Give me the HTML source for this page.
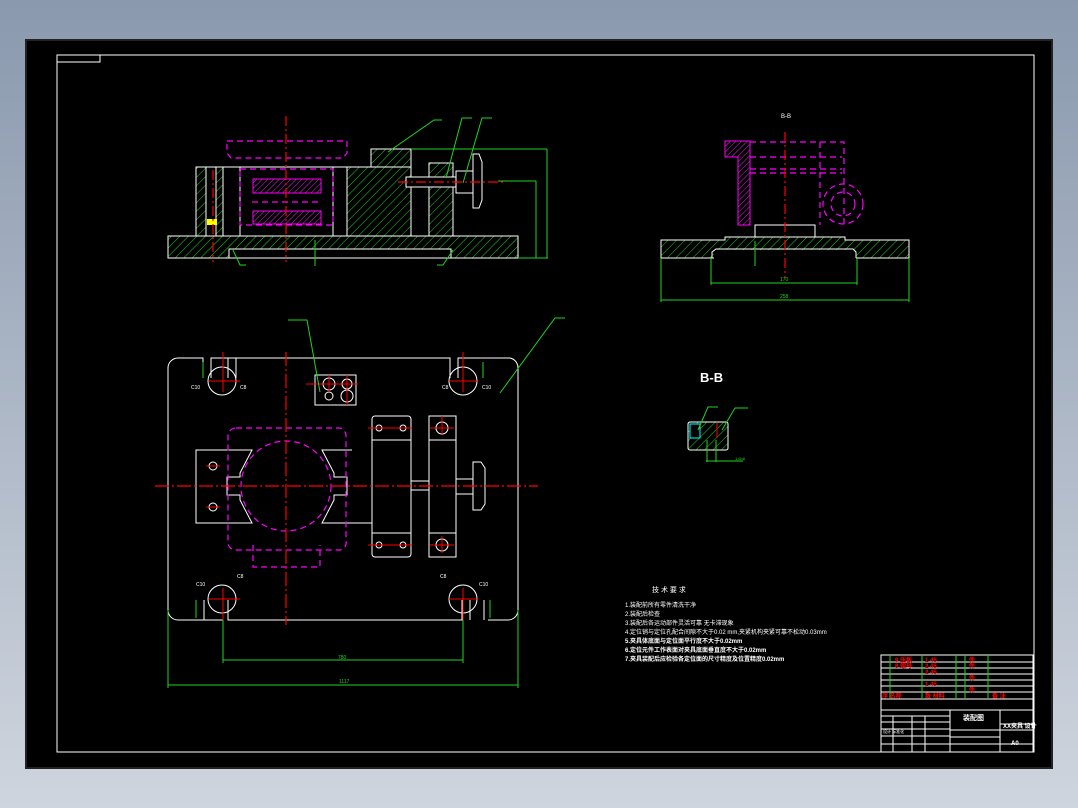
<!DOCTYPE html>
<html><head><meta charset="utf-8"><style>
html,body{margin:0;padding:0;width:1078px;height:808px;overflow:hidden;background:linear-gradient(#8a99ae,#cfd5de);}
svg{position:absolute;left:0;top:0}
text{font-family:"Liberation Sans","Noto Sans CJK SC",sans-serif}
</style></head><body>
<svg width="1078" height="808" viewBox="0 0 1078 808">
<defs>
<pattern id="hg" width="6" height="6" patternUnits="userSpaceOnUse" patternTransform="rotate(45)"><line x1="0" y1="0" x2="0" y2="6" stroke="#1fd41f" stroke-width="1"/></pattern>
<pattern id="hm" width="4" height="4" patternUnits="userSpaceOnUse" patternTransform="rotate(45)"><line x1="0" y1="0" x2="0" y2="4" stroke="#e020e0" stroke-width="1"/></pattern>
</defs>
<rect x="26" y="40" width="1026" height="728" fill="#000" stroke="#222" stroke-width="2"/>
<rect x="57" y="55" width="977" height="697" fill="none" stroke="#fff" stroke-width="1"/>
<rect x="57" y="55" width="43" height="7" fill="none" stroke="#fff" stroke-width="1"/>

<!-- FRONT VIEW -->
<g stroke="#fff" stroke-width="1">
<rect x="168" y="236" width="350" height="22" fill="url(#hg)"/>
<rect x="229" y="249" width="222" height="9" fill="#000"/>
<rect x="196" y="167" width="27" height="69" fill="url(#hg)"/>
<rect x="206" y="167" width="10" height="69" fill="#000"/>
<rect x="223" y="167" width="124" height="69" fill="none"/>
<rect x="347" y="167" width="64" height="69" fill="url(#hg)"/>
<rect x="371" y="149" width="40" height="18" fill="url(#hg)"/>
<rect x="429" y="163" width="24" height="73" fill="url(#hg)"/>
<rect x="406" y="177" width="50" height="10" fill="#000"/>
<rect x="456" y="171" width="17" height="22" fill="none"/>
<path d="M473 154 h6 l3 8 v38 l-3 8 h-6 z" fill="none"/>
<line x1="240" y1="167" x2="240" y2="236"/><line x1="333" y1="167" x2="333" y2="236"/>
</g>
<rect x="207" y="219" width="10" height="6" fill="#ff0" />
<g stroke="#f0f" stroke-width="1.2" fill="none" stroke-dasharray="6 4">
<path d="M227 141 h120 v12 l-4 5 h-112 l-4 -5 z"/>
<rect x="240" y="169" width="93" height="56"/>
<line x1="252" y1="202" x2="320" y2="202"/>
</g>
<rect x="253" y="179" width="68" height="14" fill="url(#hm)" stroke="#f0f"/>
<rect x="253" y="211" width="68" height="13" fill="url(#hm)" stroke="#f0f"/>
<g stroke="#f00" stroke-width="1.2" stroke-dasharray="10 3 2 3">
<line x1="286" y1="116" x2="286" y2="262"/>
<line x1="213" y1="170" x2="213" y2="262"/>
<line x1="398" y1="182" x2="505" y2="182"/>
</g>
<g stroke="#1fd41f" stroke-width="1" fill="none">
<polyline points="388,152 434,120 442,120"/>
<polyline points="446,178 462,118 472,118"/>
<polyline points="463,183 482,118 492,118"/>
<path d="M411 149 H547 M498 181 H536 M536 181 V258 M547 149 V258 M518 258 H548"/>
<line x1="315" y1="240" x2="315" y2="266"/>
<polyline points="233,250 240,265 246,265"/>
<polyline points="453,250 443,265 437,265"/>
</g>

<!-- SIDE VIEW -->
<text x="781" y="118" fill="#fff" font-size="6">B-B</text>
<g stroke="#fff" stroke-width="1">
<path d="M661 240 H725 V237 H845 V240 H909 V258 H661 Z" fill="url(#hg)"/>
<rect x="714" y="250" width="142" height="9" fill="#000" stroke="none"/>
<path d="M712 258 V252 L716 249 H853 L856 252 V258" fill="none"/>
<rect x="755" y="225" width="60" height="12" fill="none"/>
</g>
<path d="M725 141 H750 V225 H738 V157 H725 Z" fill="url(#hm)" stroke="#f0f"/>
<g stroke="#f0f" stroke-width="1.2" fill="none" stroke-dasharray="6 4">
<path d="M750 142 H844 V225 M750 157 H842 M750 169 H842 M750 173 H842 M820 142 V225"/>
<circle cx="843" cy="204" r="20"/>
<circle cx="843" cy="204" r="12"/>
</g>
<line x1="785" y1="132" x2="785" y2="278" stroke="#f00" stroke-width="1.2" stroke-dasharray="10 3 2 3"/>
<g stroke="#1fd41f" stroke-width="1" fill="none">
<path d="M711 258 V285 M857 258 V285 M711 283 H857 M661 258 V302 M909 258 V302 M661 300 H909"/>
<line x1="755" y1="241" x2="755" y2="266"/>
</g>
<text x="780" y="281" fill="#1fd41f" font-size="5">170</text>
<text x="780" y="298" fill="#1fd41f" font-size="5">258</text>

<!-- TOP VIEW -->
<g stroke="#fff" stroke-width="1" fill="none">
<path d="M178 358 H203 V378 M211 378 V358 H236 V378 M228 378 V358 H450 V378 M458 378 V358 H510 A10 10 0 0 1 518 368 V610 A10 10 0 0 1 508 620 H488 M470 620 V600 M462 600 V620 H228 V600 M223 600 V620 H178 A10 10 0 0 1 168 610 V368 A10 10 0 0 1 178 358"/>
<path d="M203 358 V378 M458 358 V378 M462 620 V600 M223 620 V600 M204 620 V600 M484 620 V600"/>
<circle cx="222" cy="381" r="14"/><circle cx="463" cy="381" r="14"/>
<circle cx="222" cy="599" r="14"/><circle cx="463" cy="599" r="14"/>
<rect x="315" y="375" width="41" height="30"/>
<circle cx="329" cy="384" r="6"/><circle cx="347" cy="384" r="5"/><circle cx="347" cy="396" r="6"/><circle cx="329" cy="396" r="4"/>
<path d="M196 450 H252 L240 473 V477 H227 V495 H240 V500 L252 523 H196 Z"/>
<path d="M352 450 H322 L334 473 V477 H347 V495 H334 V500 L322 523 H372"/>
<rect x="372" y="416" width="39" height="141" rx="3"/>
<line x1="372" y1="440" x2="411" y2="440"/><line x1="372" y1="533" x2="411" y2="533"/>
<rect x="429" y="416" width="27" height="141"/>
<line x1="429" y1="440" x2="456" y2="440"/><line x1="429" y1="533" x2="456" y2="533"/>
<circle cx="442" cy="428" r="6"/><circle cx="442" cy="545" r="6"/>
<rect x="411" y="481" width="18" height="9"/>
<rect x="456" y="479" width="17" height="15"/>
<path d="M473 462 h8 l4 6 v36 l-4 6 h-8 z"/>
<circle cx="213" cy="466" r="4"/><circle cx="213" cy="507" r="4"/>
<circle cx="379" cy="428" r="3"/><circle cx="403" cy="428" r="3"/><circle cx="379" cy="545" r="3"/><circle cx="403" cy="545" r="3"/>
</g>
<g stroke="#f0f" stroke-width="1.2" fill="none" stroke-dasharray="6 4">
<path d="M236 428 H340 A8 8 0 0 1 346 436 V540 A8 8 0 0 1 340 550 H236 A8 8 0 0 1 228 540 V436 A8 8 0 0 1 236 428"/>
<circle cx="286" cy="486" r="45"/>
<path d="M253 545 V567 H320 V545"/>
</g>
<g stroke="#f00" stroke-width="1.2" stroke-dasharray="14 3 2 3">
<line x1="155" y1="486" x2="538" y2="486"/>
<line x1="286" y1="352" x2="286" y2="625"/>
</g>
<g stroke="#f00" stroke-width="1">
<path d="M223 352 V392 M463 352 V392 M223 588 V630 M463 588 V630 M209 381 H240 M449 381 H478 M209 599 H240 M449 599 H478"/>
<path d="M306 384 H358 M329 375 V392 M347 375 V405 M206 466 H220 M206 507 H220 M368 428 H412 M368 545 H412 M430 428 H454 M430 545 H454 M442 416 V434 M442 536 V553"/>
</g>
<g stroke="#1fd41f" stroke-width="1" fill="none">
<path d="M223 620 V663 M463 620 V663 M223 660 H463 M168 610 V688 M518 610 V688 M168 685 H518"/>
<polyline points="500,393 555,318 565,318"/>
<polyline points="320,392 307,320 288,320"/>
<path d="M203 362 V378 M483 362 V378 M196 600 V618 M490 600 V618"/>
</g>
<text x="338" y="659" fill="#1fd41f" font-size="5">780</text>
<text x="339" y="683" fill="#1fd41f" font-size="5">1117</text>
<g fill="#fff" font-size="5"><text x="191" y="389">C10</text><text x="240" y="389">C8</text><text x="442" y="389">C8</text><text x="482" y="389">C10</text>
<text x="196" y="586">C10</text><text x="237" y="578">C8</text><text x="440" y="578">C8</text><text x="479" y="586">C10</text></g>

<!-- B-B -->
<text x="700" y="382" fill="#fff" font-size="13" font-weight="bold">B-B</text>
<rect x="688" y="422" width="40" height="28" rx="2" fill="url(#hg)" stroke="#fff"/>
<rect x="690" y="424" width="10" height="14" fill="#000" stroke="#0ff"/>
<line x1="717" y1="423" x2="717" y2="438" stroke="#f00"/>
<g stroke="#1fd41f" fill="none"><polyline points="698,430 708,407 718,407"/><polyline points="722,430 735,408 748,408"/><path d="M707 440 V462 M716 440 V462 M706 461 H743"/></g>
<text x="735" y="460" fill="#1fd41f" font-size="4">1.6h8</text>

<!-- NOTES -->
<g fill="#fff" font-size="6" font-family="Liberation Sans,Noto Sans CJK SC,sans-serif">
<text x="652" y="592" font-size="7">技 术 要 求</text>
<text x="625" y="607">1.装配前所有零件清洗干净</text>
<text x="625" y="616">2.装配后检查</text>
<text x="625" y="625">3.装配后各运动部件灵活可靠 无卡滞现象</text>
<text x="625" y="634">4.定位销与定位孔配合间隙不大于0.02 mm,夹紧机构夹紧可靠不松动0.03mm</text>
<text x="625" y="643" font-weight="bold">5.夹具体底面与定位面平行度不大于0.02mm</text>
<text x="625" y="652" font-weight="bold">6.定位元件工作表面对夹具底面垂直度不大于0.02mm</text>
<text x="625" y="661" font-weight="bold">7.夹具装配后应检验各定位面的尺寸精度及位置精度0.02mm</text>
</g>

<!-- TITLE BLOCK -->
<g stroke="#fff" stroke-width="1" fill="none">
<rect x="881" y="655" width="152" height="97"/>
<path d="M881 662 H1033 M881 668 H1033 M881 674 H1033 M881 680 H1033 M881 686 H1033 M881 692 H1033 M881 699 H1033 M881 710 H1033"/>
<path d="M881 716 H950 M881 722 H950 M881 729 H950 M881 736 H950 M881 744 H950 M950 730 H1033 M950 737 H1000 M950 744 H1033 M1000 724 H1033"/>
<path d="M950 710 V752 M1000 710 V752 M893 716 V752 M912 716 V752 M925 716 V752"/>
</g>
<g stroke="#1fd41f"><path d="M890 655 V699 M922 655 V699 M956 655 V699 M965 655 V699 M988 655 V699"/></g>
<g fill="#f00" font-size="6" font-weight="bold">
<text x="895" y="662">9 压板</text><text x="925" y="662">1 45</text><text x="969" y="662">件</text>
<text x="895" y="668">8 螺母</text><text x="925" y="668">2 45</text><text x="969" y="668">件</text>
<text x="925" y="674">2 45</text><text x="969" y="680">件</text><text x="925" y="686">1 45</text><text x="969" y="692">件</text>
<text x="882" y="698">序 名称</text><text x="925" y="698">数 材料</text><text x="992" y="698">备 注</text>
</g>
<text x="963" y="720" fill="#fff" font-size="7" font-weight="bold">装配图</text>
<text x="1003" y="728" fill="#fff" font-size="6" font-weight="bold">XX夹具 设计</text>
<text x="1011" y="745" fill="#fff" font-size="6" font-weight="bold">A0</text>
<text x="883" y="733" fill="#fff" font-size="4">设计 标准化</text>
</svg>
</body></html>
